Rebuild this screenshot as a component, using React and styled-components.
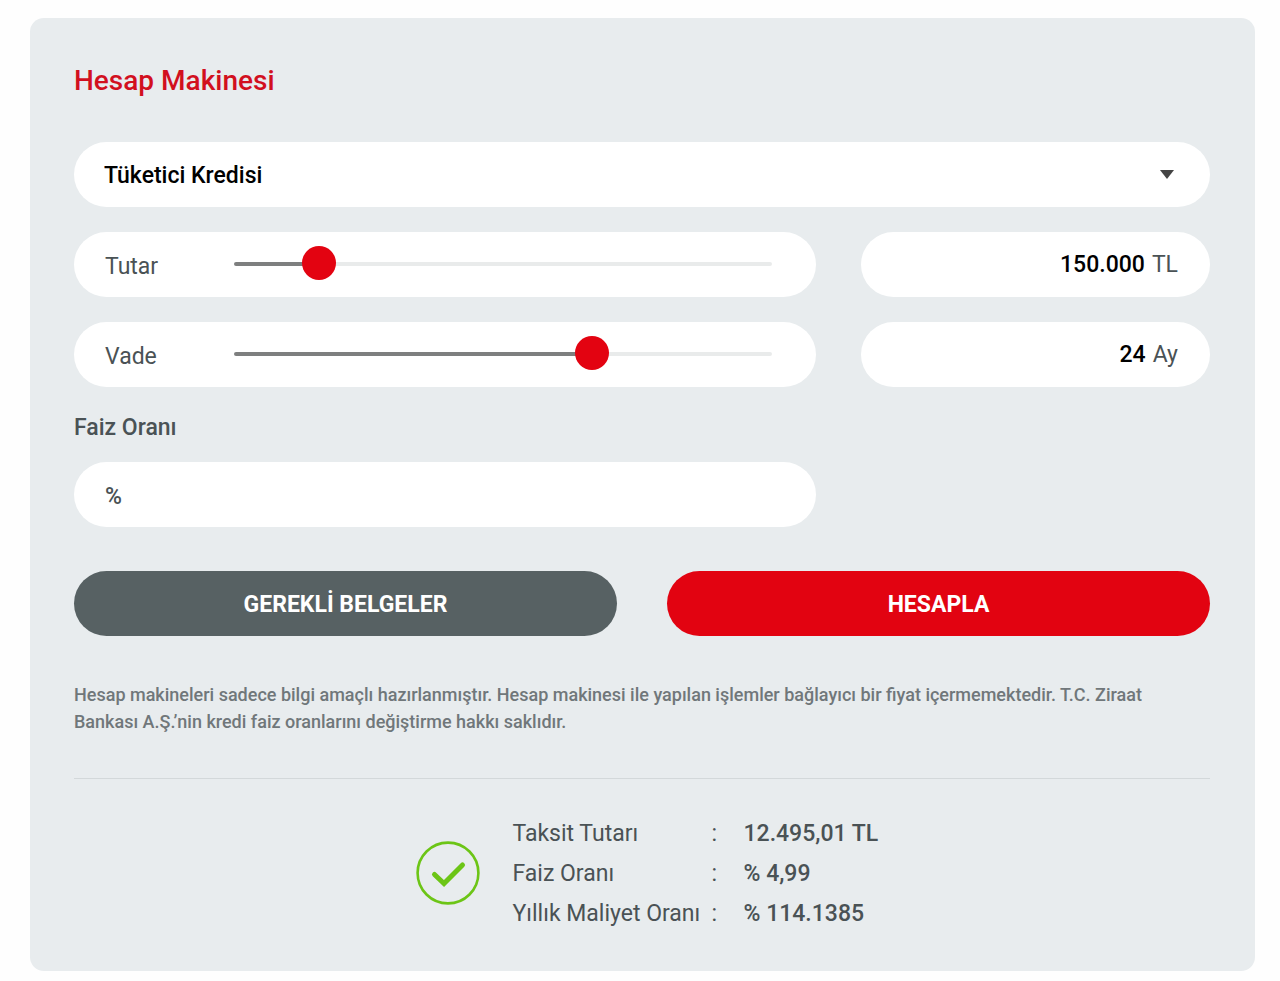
import React, { useState } from 'react';
import styled, { createGlobalStyle } from 'styled-components';

const AMOUNT = { min: 1000, max: 1100000, step: 1000 };
const TERM = { min: 1, max: 35, step: 1 };

const results = [
	{ label: 'Taksit Tutarı', value: '12.495,01 TL' },
	{ label: 'Faiz Oranı', value: '% 4,99' },
	{ label: 'Yıllık Maliyet Oranı', value: '% 114.1385' },
];

function formatNumber(n)
{
	return String(n).replace(/\B(?=(\d{3})+(?!\d))/g, '.');
}

function parseNumber(text)
{
	return Number(text.replace(/\D/g, ''));
}

function SliderRow({ id, label, unit, range, value, onChange })
{
	const percent = Math.min(100, (value - range.min) / (range.max - range.min) * 100);

	return (
		<Columns>
			<Pill>
				<SliderLabel htmlFor={id}>{label}</SliderLabel>
				<Slider
					id={id}
					type="range"
					{...range}
					value={value}
					style={{ '--fill': percent + '%' }}
					onChange={e => onChange(Number(e.target.value))}
				/>
			</Pill>
			<Pill>
				<ValueInput
					id={id + '-value'}
					type="text"
					inputMode="numeric"
					aria-label={label}
					value={formatNumber(value)}
					onChange={e => onChange(parseNumber(e.target.value))}
				/>
				<Unit htmlFor={id + '-value'}>{unit}</Unit>
			</Pill>
		</Columns>
	);
}

function App()
{
	const [product, setProduct] = useState('tuketici');
	const [amount, setAmount] = useState(150000);
	const [term, setTerm] = useState(24);
	const [rate, setRate] = useState('');

	return (
		<>
			<GlobalStyle />
			<Card>
				<Title>Hesap Makinesi</Title>

				<form onSubmit={e => e.preventDefault()}>
					<Fields>
						<SelectBox>
							<Select aria-label="Kredi türü" value={product} onChange={e => setProduct(e.target.value)}>
								<option value="tuketici">Tüketici Kredisi</option>
								<option value="konut">Konut Kredisi</option>
								<option value="tasit">Taşıt Kredisi</option>
							</Select>
							<Arrow viewBox="0 0 14 9" aria-hidden="true">
								<path d="M0 0h14L7 9z" />
							</Arrow>
						</SelectBox>

						<SliderRow id="amount" label="Tutar" unit="TL" range={AMOUNT} value={amount} onChange={setAmount} />
						<SliderRow id="term" label="Vade" unit="Ay" range={TERM} value={term} onChange={setTerm} />
					</Fields>

					<RateLabel htmlFor="rate">Faiz Oranı</RateLabel>
					<Columns>
						<Pill>
							<Percent>%</Percent>
							<RateInput id="rate" type="text" inputMode="decimal" value={rate} onChange={e => setRate(e.target.value)} />
						</Pill>
					</Columns>

					<Actions>
						<Button type="button">GEREKLİ BELGELER</Button>
						<Button type="submit" $primary>HESAPLA</Button>
					</Actions>
				</form>

				<Note>
					Hesap makineleri sadece bilgi amaçlı hazırlanmıştır. Hesap makinesi ile yapılan işlemler bağlayıcı bir fiyat içermemektedir. T.C. Ziraat Bankası A.Ş.’nin kredi faiz oranlarını değiştirme hakkı saklıdır.
				</Note>

				<Summary>
					<Check viewBox="0 0 64 64" aria-hidden="true">
						<circle cx="32" cy="32" r="30.4" strokeWidth="2.6" />
						<path d="M18.5 33.5l9.5 9L46.5 24" strokeWidth="5" strokeLinecap="round" />
					</Check>
					<ResultTable>
						<tbody>
							{results.map(r => (
								<tr key={r.label}>
									<ResultName scope="row">{r.label}</ResultName>
									<Colon>:</Colon>
									<ResultValue>{r.value}</ResultValue>
								</tr>
							))}
						</tbody>
					</ResultTable>
				</Summary>
			</Card>
		</>
	);
}

const GlobalStyle = createGlobalStyle`
	*, *::before, *::after {
		box-sizing: border-box;
	}

	body {
		margin: 0;
		background: #fefefe;
		color: #4a5255;
		font-family: Roboto, "Liberation Sans", sans-serif;
		font-size: 23px;
		line-height: 31px;
	}

	input, select, button {
		font: inherit;
		color: inherit;
	}
`;

const Card = styled.main`
	margin: 18px 25px 10px 30px;
	padding: 44px 45px 38px 44px;
	border-radius: 14px;
	background: #e8ecee;
`;

const Title = styled.h1`
	margin: 0 0 42px;
	color: #d2101e;
	font-size: 28px;
	font-weight: 500;
	line-height: 38px;
`;

const Fields = styled.div`
	display: grid;
	gap: 25px;
`;

const Columns = styled.div`
	display: grid;
	grid-template-columns: 17fr 8fr;
	gap: 45px;
`;

const Pill = styled.div`
	display: flex;
	align-items: center;
	min-width: 0;
	height: 65px;
	padding: 0 32px 0 31px;
	border-radius: 33px;
	background: #fff;
`;

const SelectBox = styled.div`
	display: grid;
	align-items: center;
`;

const Select = styled.select`
	grid-area: 1 / 1;
	width: 100%;
	height: 65px;
	padding: 2px 60px 0 30px;
	border: 0;
	border-radius: 33px;
	background: #fff;
	color: #000;
	font-weight: 500;
	appearance: none;
`;

const Arrow = styled.svg`
	grid-area: 1 / 1;
	justify-self: end;
	width: 14px;
	height: 9px;
	margin-right: 36px;
	fill: #444;
	pointer-events: none;
`;

const SliderLabel = styled.label`
	flex: 0 0 129px;
	padding-top: 4px;
`;

const Slider = styled.input`
	flex: 1;
	min-width: 0;
	height: 34px;
	margin: 0 12px 2px 0;
	background: none;
	appearance: none;

	&::-webkit-slider-runnable-track {
		height: 4px;
		border-radius: 2px;
		background: linear-gradient(to right, #7e7f7f var(--fill), #e9ebeb var(--fill));
	}

	&::-webkit-slider-thumb {
		width: 34px;
		height: 34px;
		margin-top: -16px;
		border-radius: 50%;
		background: #e30311;
		appearance: none;
	}
`;

const ValueInput = styled.input`
	flex: 1;
	min-width: 0;
	padding: 0;
	border: 0;
	background: none;
	color: #000;
	font-weight: 500;
	text-align: right;
`;

const Unit = styled.label`
	margin-left: 7px;
`;

const RateLabel = styled.label`
	display: block;
	margin: 25px 0 19px;
	font-weight: 500;
`;

const Percent = styled.span`
	padding-top: 4px;
	font-weight: 500;
`;

const RateInput = styled.input`
	flex: 1;
	min-width: 0;
	padding: 0 0 0 8px;
	border: 0;
	background: none;
`;

const Actions = styled.div`
	display: grid;
	grid-template-columns: 1fr 1fr;
	gap: 50px;
	margin-top: 44px;
`;

const Button = styled.button`
	height: 65px;
	padding: 2px 0 0;
	border: 0;
	border-radius: 33px;
	background: ${props => props.$primary ? '#e20311' : '#576163'};
	color: #fff;
	font-weight: 700;
	cursor: pointer;
`;

const Note = styled.p`
	margin: 45px 0 0;
	padding-bottom: 43px;
	border-bottom: 1px solid #d3d8da;
	color: #70777a;
	font-size: 18px;
	font-weight: 500;
	line-height: 27px;
`;

const Summary = styled.div`
	display: flex;
	align-items: center;
	justify-content: center;
	gap: 33px;
	margin-top: 34px;
`;

const Check = styled.svg`
	width: 64px;
	height: 64px;
	fill: none;
	stroke: #6cc516;
`;

const ResultTable = styled.table`
	width: 356px;
	table-layout: fixed;
	border-collapse: collapse;

	th, td {
		height: 40px;
		padding: 0;
		text-align: left;
	}
`;

const ResultName = styled.th`
	width: 199px;
	font-weight: 400;
	white-space: nowrap;
`;

const Colon = styled.td`
	width: 32px;
`;

const ResultValue = styled.td`
	font-weight: 500;
	white-space: nowrap;
`;

export default App;
